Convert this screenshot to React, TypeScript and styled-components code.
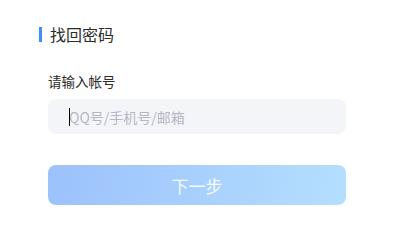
import React, { useState } from "react";
import styled, { createGlobalStyle } from "styled-components";

const GlobalStyle = createGlobalStyle`
  html, body {
    margin: 0;
    padding: 0;
    background: #ffffff;
  }
  body {
    font-family: "Noto Sans CJK SC", "Noto Sans", sans-serif;
  }
`;

const App: React.FC = () => {
  const [account, setAccount] = useState<string>("");

  return (
    <>
      <GlobalStyle />
      <Page>
        <Header>
          <Bar />
          <Title>找回密码</Title>
        </Header>
        <Form>
          <Label>请输入帐号</Label>
          <Field>
            <Input
              value={account}
              placeholder="QQ号/手机号/邮箱"
              onChange={(e) => setAccount(e.target.value)}
            />
            {!account.length && <Caret />}
          </Field>
          <NextBtn disabled={!account.length}>下一步</NextBtn>
        </Form>
      </Page>
    </>
  );
};

const Page = styled.div`
  width: 408px;
  height: 241px;
  box-sizing: border-box;
  padding: 24px 0 0 39px;
  background: #ffffff;
`;

const Header = styled.div`
  display: flex;
  align-items: center;
  height: 20px;
`;

const Bar = styled.span`
  width: 3px;
  height: 15px;
  background: #3d8ef5;
  margin-right: 8px;
`;

const Title = styled.div`
  font-size: 16px;
  line-height: 20px;
  color: #2b2b2b;
`;

const Form = styled.div`
  display: flex;
  flex-direction: column;
  width: 298px;
  margin: 27px 0 0 9px;
`;

const Label = styled.div`
  font-size: 13.5px;
  line-height: 20px;
  color: #2b2b2b;
`;

const Field = styled.div`
  position: relative;
  display: flex;
  margin-top: 8px;
`;

const Input = styled.input`
  flex: 1;
  height: 35px;
  padding: 0 0 0 21px;
  border: none;
  border-radius: 8px;
  background: #f4f5f9;
  font-family: "Noto Sans CJK SC", "Noto Sans", sans-serif;
  font-size: 14px;
  color: #333;
  caret-color: #000;
  outline: none;

  &::placeholder {
    color: #b5b8c4;
  }
`;

const Caret = styled.span`
  position: absolute;
  left: 21px;
  top: 9px;
  width: 1px;
  height: 18px;
  background: #000;
  pointer-events: none;
`;

const NextBtn = styled.button`
  height: 40px;
  margin-top: 31px;
  border: none;
  border-radius: 8px;
  background: linear-gradient(100deg, #9cc1fc 0%, #b4dffe 100%);
  color: rgba(255, 255, 255, 0.92);
  font-family: "Noto Sans CJK SC", "Noto Sans", sans-serif;
  font-size: 17px;
  cursor: pointer;

  &:disabled {
    cursor: not-allowed;
  }
`;

export default App;
